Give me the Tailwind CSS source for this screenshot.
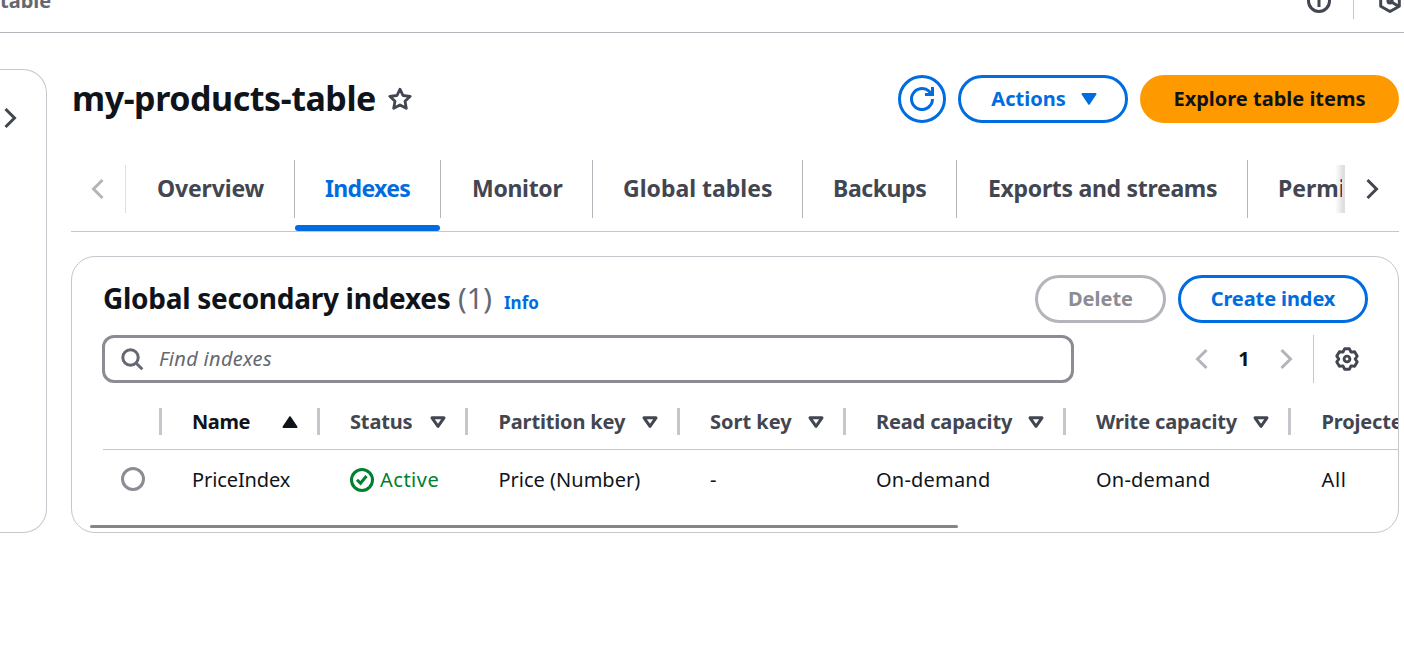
<!DOCTYPE html>
<html lang="en">
<head>
<meta charset="utf-8">
<title>my-products-table</title>
<script src="https://cdn.jsdelivr.net/npm/@tailwindcss/browser@4"></script>
</head>
<body class="h-[651px] overflow-hidden bg-white font-['Noto_Sans','Open_Sans',sans-serif] text-[#0f141a]">
<header class="relative flex h-[33px] items-start justify-between border-b border-[#b4b4bb]">
  <span class="-mt-[13px] text-[20px] leading-7 font-bold text-[#656871]">table</span>
  <div class="flex items-start pr-[3px]">
    <svg class="-mt-[11px] size-6" viewBox="0 0 24 24" fill="none" stroke="#424650" stroke-width="3"><circle cx="12" cy="12" r="10.5"/><path d="M12 11v7M12 6v3"/></svg>
    <div class="ml-[22px] h-[19px] w-px bg-[#c6c6cd]"></div>
    <svg class="-mr-px ml-[24px] -mt-[11px] size-6" viewBox="0 0 24 24" fill="none" stroke="#424650" stroke-width="3"><path d="M12 1.5 21.3 6.7v10.6L12 22.5 2.7 17.3V6.7z" stroke-linejoin="round"/><path d="M12 12l8 5"/><circle cx="12" cy="12" r="2"/></svg>
  </div>
</header>
<div class="flex pt-9">
  <aside class="h-[464px] w-[47px] shrink-0 rounded-r-3xl border border-l-0 border-[#c6c6cd] pt-9">
    <svg class="-ml-0.5 size-6" viewBox="0 0 16 16" fill="none" stroke="#424650" stroke-width="2"><path d="m5 2 6 6-6 6"/></svg>
  </aside>
  <main class="ml-6 w-[1328px] shrink-0 pt-1.5">
    <div class="flex h-12 items-center">
      <h1 class="w-[305px] pb-0.5 pl-px text-[34px] leading-[44px] font-bold tracking-[-0.45px] whitespace-nowrap">my-products-table</h1>
      <svg class="ml-3 size-6" viewBox="0 0 24 24" fill="none" stroke="#424650" stroke-width="2.8"><path d="m12 2.2 3 6.3 7.2.8-5.2 4.9 1.3 7.1-6.3-3.4-6.3 3.4 1.3-7.1-5.2-4.9 7.2-.8z" stroke-linejoin="round"/></svg>
      <div class="ml-auto flex gap-3 text-[20px] font-bold text-[#006ce0]">
        <button class="flex size-12 items-center justify-center rounded-full border-3 border-[#006ce0]">
          <svg class="size-6" viewBox="0 0 24 24" fill="none" stroke="currentColor" stroke-width="3"><path d="M22.5 12A10.5 10.5 0 1 1 19 4.2l2.5 2.8"/><path d="M22.5 0v7.5H15"/></svg>
        </button>
        <button class="flex h-12 w-[170px] items-center rounded-full border-3 border-[#006ce0] pl-[30px]">
          <span class="w-[75px]">Actions</span>
          <svg class="ml-[11px] size-6" viewBox="0 0 24 24" fill="currentColor" stroke="currentColor" stroke-width="2" stroke-linejoin="round"><path d="M5.5 7h13L12 16.8z"/></svg>
        </button>
        <button class="h-12 w-[259px] rounded-full bg-[#ff9900] text-[#0f141a]">Explore table items</button>
      </div>
    </div>
    <nav class="mt-8 flex h-[77px] items-start border-b border-[#c6c6cd] pt-[5px] text-[23px] leading-[56px] font-bold text-[#424650] whitespace-nowrap">
      <div class="mt-[5px] flex h-12 w-[55px] shrink-0 items-center border-r border-[#dedee3] pl-[15px]">
        <svg class="size-6" viewBox="0 0 16 16" fill="none" stroke="#b4b4bb" stroke-width="2"><path d="M11 2 5 8l6 6"/></svg>
      </div>
      <div class="flex h-[71px] w-[1217px] shrink-0 overflow-hidden">
        <a class="h-[58px] w-[169px] shrink-0 border-r border-[#b4b4bb] pl-[31px] tracking-[-0.15px]">Overview</a>
        <a class="relative h-[71px] w-[146px] shrink-0 pl-[30px] tracking-[-0.65px] text-[#006ce0]">Indexes<span class="absolute top-0 right-0 h-[58px] w-px bg-[#b4b4bb]"></span><span class="absolute bottom-0 left-0 h-1.5 w-[145px] rounded-full bg-[#006ce0]"></span></a>
        <a class="h-[58px] w-[152px] shrink-0 border-r border-[#b4b4bb] pl-[31px] tracking-[-0.3px]">Monitor</a>
        <a class="h-[58px] w-[210px] shrink-0 border-r border-[#b4b4bb] pl-[30px]">Global tables</a>
        <a class="h-[58px] w-[154px] shrink-0 border-r border-[#b4b4bb] pl-[30px] tracking-[-0.4px]">Backups</a>
        <a class="h-[58px] w-[291px] shrink-0 border-r border-[#b4b4bb] pl-[31px] tracking-[-0.3px]">Exports and streams</a>
        <a class="h-[58px] shrink-0 pl-[30px]">Permissions</a>
      </div>
      <div class="relative mt-[5px] flex h-12 w-14 shrink-0 items-center bg-white pl-[17px]">
        <div class="absolute inset-y-0 -left-2 w-2 bg-linear-to-r from-black/0 to-black/12"></div>
        <div class="absolute inset-y-0 -left-px w-[3px] bg-[#dedee3]"></div>
        <svg class="size-6" viewBox="0 0 16 16" fill="none" stroke="#424650" stroke-width="2"><path d="m5 2 6 6-6 6"/></svg>
      </div>
    </nav>
    <section class="relative mt-6 h-[277px] overflow-hidden rounded-3xl border border-[#c6c6cd]">
      <div class="mt-[18px] flex h-12 items-center pr-[30px] pl-[31px]">
        <h2 class="w-[348px] pb-0.5 text-[28px] font-bold tracking-[-0.28px] whitespace-nowrap">Global secondary indexes</h2>
        <span class="ml-[7px] w-[37px] pb-0.5 text-[29px] text-[#656871]">(1)</span>
        <a class="mt-2 ml-[9px] text-[17px] font-bold text-[#006ce0]">Info</a>
        <div class="ml-auto flex gap-3 text-[20px] font-bold">
          <button class="h-12 w-[131px] rounded-full border-3 border-[#b4b4bb] text-[#8c8c94]">Delete</button>
          <button class="h-12 w-[190px] rounded-full border-3 border-[#006ce0] tracking-[-0.1px] text-[#006ce0]">Create index</button>
        </div>
      </div>
      <div class="mt-3 flex h-12 items-center pl-[30px]">
        <div class="flex h-12 w-[972px] items-center rounded-xl border-3 border-[#8c8c94] pl-[15px] text-[20px] text-[#656871] italic">
          <svg class="size-6" viewBox="0 0 24 24" fill="none" stroke="#656871" stroke-width="3"><circle cx="10.5" cy="10.5" r="7.7"/><path d="m15.7 15.7 6.6 6.6"/></svg>
          <span class="ml-[15px] tracking-[0.3px]">Find indexes</span>
        </div>
        <svg class="ml-[116px] size-6" viewBox="0 0 16 16" fill="none" stroke="#b4b4bb" stroke-width="2"><path d="M11 2 5 8l6 6"/></svg>
        <span class="w-[60px] text-center text-[20px] font-bold">1</span>
        <svg class="size-6" viewBox="0 0 16 16" fill="none" stroke="#b4b4bb" stroke-width="2"><path d="m5 2 6 6-6 6"/></svg>
        <div class="ml-[15px] h-12 w-px bg-[#c6c6cd]"></div>
        <svg class="ml-[21px] size-6" viewBox="0 0 24 24" fill="none" stroke="#424650" stroke-width="2.9" stroke-linejoin="round"><path d="M9.7 1.7H14.3L16 5.1 19.6 4.8 22.2 9.1 20.2 12 22.2 14.9 19.6 19.2 16 18.9 14.3 22.3H9.7L8 18.9 4.4 19.2 1.8 14.9 3.8 12 1.8 9.1 4.4 4.8 8 5.1z"/><circle cx="12" cy="12" r="2.9"/></svg>
      </div>
      <div class="ml-[31px] w-[1400px]">
        <div class="grid h-[67px] grid-cols-[59px_158px_148px_212px_166px_220px_225px_212px] items-center border-b border-[#c6c6cd] pt-[11px] text-[20px] leading-[27px] font-bold tracking-[-0.15px] text-[#424650] whitespace-nowrap">
          <div class="h-[27px] border-r-3 border-[#c6c6cd]"></div>
          <div class="flex h-[27px] items-center justify-between border-r-3 border-[#c6c6cd] pr-[15px] pl-[30px] tracking-[-0.4px] text-[#0f141a]">Name<svg class="size-6" viewBox="0 0 24 24" fill="currentColor" stroke="currentColor" stroke-width="2" stroke-linejoin="round"><path d="M5.5 17h13L12 7.2z"/></svg></div>
          <div class="flex h-[27px] items-center justify-between border-r-3 border-[#c6c6cd] pr-[15px] pl-[30px]">Status<svg class="size-6" viewBox="0 0 24 24" fill="none" stroke="currentColor" stroke-width="3" stroke-linejoin="round"><path d="M6 7.8h12L12 16.3z"/></svg></div>
          <div class="flex h-[27px] items-center justify-between border-r-3 border-[#c6c6cd] pr-[15px] pl-[30.5px]">Partition key<svg class="size-6" viewBox="0 0 24 24" fill="none" stroke="currentColor" stroke-width="3" stroke-linejoin="round"><path d="M6 7.8h12L12 16.3z"/></svg></div>
          <div class="flex h-[27px] items-center justify-between border-r-3 border-[#c6c6cd] pr-[15px] pl-[30px]"><span class="tracking-normal">Sort key</span><svg class="size-6" viewBox="0 0 24 24" fill="none" stroke="currentColor" stroke-width="3" stroke-linejoin="round"><path d="M6 7.8h12L12 16.3z"/></svg></div>
          <div class="flex h-[27px] items-center justify-between border-r-3 border-[#c6c6cd] pr-[15px] pl-[30px]">Read capacity<svg class="size-6" viewBox="0 0 24 24" fill="none" stroke="currentColor" stroke-width="3" stroke-linejoin="round"><path d="M6 7.8h12L12 16.3z"/></svg></div>
          <div class="flex h-[27px] items-center justify-between border-r-3 border-[#c6c6cd] pr-[15px] pl-[30px]">Write capacity<svg class="size-6" viewBox="0 0 24 24" fill="none" stroke="currentColor" stroke-width="3" stroke-linejoin="round"><path d="M6 7.8h12L12 16.3z"/></svg></div>
          <div class="pl-[30.5px]">Projected attributes</div>
        </div>
        <div class="grid h-[60px] grid-cols-[59px_158px_148px_212px_166px_220px_225px_212px] items-center text-[20px] whitespace-nowrap">
          <div class="pb-0.5 pl-[18px]"><div class="size-6 rounded-full border-3 border-[#8c8c94]"></div></div>
          <div class="pl-[30px] tracking-[-0.1px]">PriceIndex</div>
          <div class="flex items-center gap-1.5 pl-[30px] tracking-[0.5px] text-[#00802f]"><svg class="size-6" viewBox="0 0 24 24" fill="none" stroke="currentColor" stroke-width="3"><circle cx="12" cy="12" r="10.5"/><path d="m7 11.8 3.5 3.5 6-7.3"/></svg>Active</div>
          <div class="pl-[30.5px]">Price (Number)</div>
          <div class="pl-[30px]">-</div>
          <div class="pl-[30px] tracking-[0.2px]">On-demand</div>
          <div class="pl-[30px] tracking-[0.2px]">On-demand</div>
          <div class="pl-[30.5px] tracking-[0.6px]">All</div>
        </div>
      </div>
      <div class="mt-[15px] ml-[18px] h-[3px] w-[868px] rounded-full bg-[#858585]"></div>
    </section>
  </main>
</div>
</body>
</html>
